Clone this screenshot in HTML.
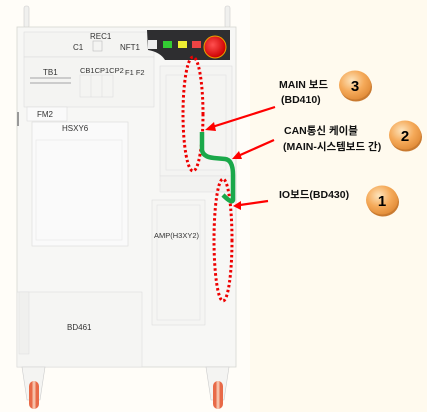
<!DOCTYPE html>
<html><head><meta charset="utf-8"><style>
html,body{margin:0;padding:0;}
body{width:427px;height:412px;overflow:hidden;background:#fffaee;font-family:"Liberation Sans","Noto Sans CJK KR",sans-serif;}
svg{display:block}
.k{font-family:"Liberation Sans","Noto Sans CJK KR",sans-serif;font-weight:bold;font-size:10.5px;fill:#111;}
.l{font-family:"Liberation Sans",sans-serif;font-size:8px;fill:#333;}
</style></head><body>
<svg width="427" height="412" viewBox="0 0 427 412" xmlns="http://www.w3.org/2000/svg">
<defs>
<radialGradient id="og" cx="40%" cy="35%" r="70%"><stop offset="0" stop-color="#fde4bc"/><stop offset="0.55" stop-color="#f5aa5a"/><stop offset="1" stop-color="#e08a36"/></radialGradient>
<radialGradient id="rk" cx="40%" cy="40%" r="60%"><stop offset="0" stop-color="#ff5050"/><stop offset="1" stop-color="#c00"/></radialGradient>
</defs>
<rect x="0" y="0" width="250" height="412" fill="#fffdf8"/>
<rect x="24" y="6" width="5" height="22" rx="2" fill="#f0f0ee" stroke="#ccc" stroke-width="0.6"/>
<rect x="225" y="6" width="5" height="22" rx="2" fill="#f0f0ee" stroke="#ccc" stroke-width="0.6"/>
<rect x="17" y="27" width="219" height="340" fill="#f7f7f5" stroke="#d6d6d2" stroke-width="0.8"/>
<rect x="24" y="32" width="130" height="25" fill="#f4f4f2" stroke="#ddd" stroke-width="0.6"/>
<rect x="24" y="57" width="130" height="50" fill="#f4f4f2" stroke="#ddd" stroke-width="0.6"/>
<path d="M147 30 H230 V60 H165 Q160 52 148 50 Z" fill="#2e2e30"/>
<rect x="148" y="40" width="9" height="9" fill="#eee"/>
<rect x="163" y="41" width="9" height="7" fill="#3c3"/>
<rect x="178" y="41" width="9" height="7" fill="#ee3"/>
<rect x="192" y="41" width="9" height="7" fill="#e44"/>
<circle cx="215" cy="47" r="11" fill="url(#rk)" stroke="#e8a000" stroke-width="1"/>
<text class="l" x="90" y="39">REC1</text>
<text class="l" x="73" y="50">C1</text>
<rect x="93" y="41" width="9" height="10" fill="none" stroke="#bbb" stroke-width="0.6"/>
<text class="l" x="120" y="50">NFT1</text>
<text class="l" x="43" y="75">TB1</text>
<rect x="30" y="77" width="41" height="2" fill="#ccc"/><rect x="30" y="82" width="41" height="2" fill="#ccc"/>
<text class="l" x="80" y="73" style="font-size:7.5px">CB1CP1CP2</text>
<text class="l" x="125" y="75" style="font-size:7.5px">F1 F2</text>
<rect x="80" y="75" width="33" height="22" fill="none" stroke="#ddd" stroke-width="0.6"/>
<line x1="91" y1="75" x2="91" y2="97" stroke="#ddd" stroke-width="0.6"/><line x1="102" y1="75" x2="102" y2="97" stroke="#ddd" stroke-width="0.6"/>
<rect x="27" y="107" width="40" height="14" fill="#fafafa" stroke="#ddd" stroke-width="0.6"/>
<text class="l" x="37" y="117">FM2</text>
<rect x="17" y="112" width="2" height="14" fill="#999"/>
<rect x="32" y="122" width="96" height="124" fill="#fafafa" stroke="#ddd" stroke-width="0.7"/>
<text class="l" x="62" y="131">HSXY6</text>
<rect x="36" y="140" width="86" height="100" fill="none" stroke="#e6e6e6" stroke-width="0.6"/>
<rect x="160" y="66" width="72" height="110" fill="#f4f4f2" stroke="#ddd" stroke-width="0.6"/>
<rect x="166" y="75" width="60" height="95" fill="none" stroke="#e2e2e2" stroke-width="0.6"/>
<rect x="160" y="176" width="72" height="16" fill="#f2f2f0" stroke="#ddd" stroke-width="0.5"/>
<rect x="152" y="200" width="53" height="125" fill="#f5f5f3" stroke="#ddd" stroke-width="0.6"/>
<rect x="157" y="205" width="43" height="115" fill="none" stroke="#e2e2e2" stroke-width="0.6"/>
<text class="l" x="154" y="238" style="font-size:7.5px">AMP(H3XY2)</text>
<rect x="17" y="292" width="125" height="75" fill="#f5f5f3" stroke="#ddd" stroke-width="0.6"/>
<text class="l" x="67" y="330">BD461</text>
<rect x="19" y="292" width="10" height="62" fill="#f0f0ee" stroke="#ddd" stroke-width="0.5"/>
<path d="M22 367 H45 L40 400 H27 Z" fill="#f4f4f2" stroke="#ccc" stroke-width="0.6"/>
<rect x="29" y="381" width="10" height="28" rx="5" fill="#e86a48"/><rect x="32.5" y="381" width="3" height="28" fill="#f6c0a8"/>
<path d="M206 367 H229 L224 400 H211 Z" fill="#f4f4f2" stroke="#ccc" stroke-width="0.6"/>
<rect x="213" y="381" width="10" height="28" rx="5" fill="#e86a48"/><rect x="216.5" y="381" width="3" height="28" fill="#f6c0a8"/>
<ellipse cx="193" cy="114" rx="10" ry="57" fill="none" stroke="#e00" stroke-width="3" stroke-dasharray="2.5 2.5"/>
<ellipse cx="223" cy="240" rx="9" ry="61" fill="none" stroke="#e00" stroke-width="3" stroke-dasharray="2.5 2.5"/>
<path d="M202 132 L202 150 Q203 157 214 158 L225 159 Q233 160 233 175 L233 200 Q232 204 223 195" fill="none" stroke="#1aa84a" stroke-width="4.5" stroke-linejoin="round"/>
<g stroke="#f00" stroke-width="2.2" fill="#f00">
<line x1="275" y1="107" x2="212" y2="127"/><polygon points="205,130 214,122 216,131" stroke="none"/>
<line x1="274" y1="140" x2="238" y2="156"/><polygon points="232,159 239,151 242,159" stroke="none"/>
<line x1="268" y1="201" x2="240" y2="205"/><polygon points="233,206 241,201 241,210" stroke="none"/>
</g>
<text class="k" x="279" y="88">MAIN 보드</text>
<text class="k" x="281" y="103">(BD410)</text>
<text class="k" x="284" y="134">CAN통신 케이블</text>
<text class="k" x="283" y="150">(MAIN-시스템보드 간)</text>
<text class="k" x="279" y="198">IO보드(BD430)</text>
<g>
<ellipse cx="356" cy="87" rx="16" ry="14.5" fill="#c97a30"/>
<ellipse cx="355" cy="85" rx="16" ry="14.5" fill="url(#og)"/>
<text x="355" y="91" text-anchor="middle" style="font:bold 15px 'Liberation Sans',sans-serif">3</text>
<ellipse cx="406" cy="137" rx="16" ry="14.5" fill="#c97a30"/>
<ellipse cx="405" cy="135" rx="16" ry="14.5" fill="url(#og)"/>
<text x="405" y="141" text-anchor="middle" style="font:bold 15px 'Liberation Sans',sans-serif">2</text>
<ellipse cx="383" cy="202" rx="16" ry="14.5" fill="#c97a30"/>
<ellipse cx="382" cy="200" rx="16" ry="14.5" fill="url(#og)"/>
<text x="382" y="206" text-anchor="middle" style="font:bold 15px 'Liberation Sans',sans-serif">1</text>
</g>
</svg>
</body></html>
